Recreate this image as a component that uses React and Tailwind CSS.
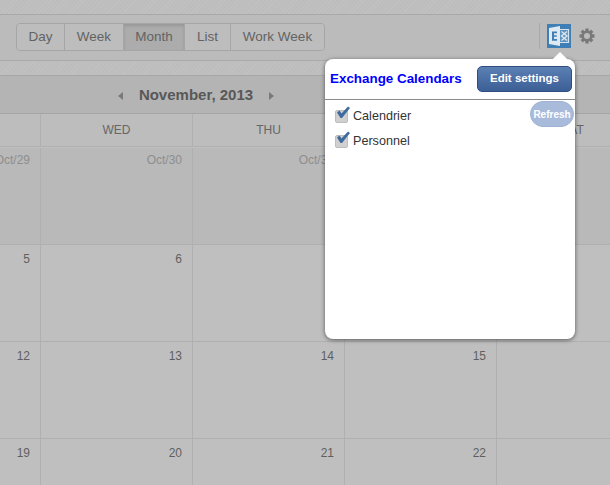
const hatch = 'h-[15px] border-b border-[#a9a9a9] bg-[#bfbfbf] bg-[repeating-linear-gradient(135deg,#c1c1c1_0px,#c1c1c1_1px,#bdbdbd_1px,#bdbdbd_3px)]'
const columns = 'grid grid-cols-[41px_152px_152px_152px_152px]'

const views = [
    { label: 'Day', width: 'w-[48px]' },
    { label: 'Week', width: 'w-[59px]' },
    { label: 'Month', width: 'w-[61px]', active: true },
    { label: 'List', width: 'w-[46px]' },
    { label: 'Work Week', width: 'w-[93px]' },
]

const weeks = [
    { height: 'h-[97px]', muted: true, days: ['Oct/29', 'Oct/30', 'Oct/31', '', ''] },
    { height: 'h-[97px]', days: ['5', '6', '', '', ''] },
    { height: 'h-[97px]', days: ['12', '13', '14', '15', ''] },
    { height: 'h-[60px]', days: ['19', '20', '21', '22', ''] },
]

function ExchangeIcon() {
    return (
        <svg width="24" height="24" viewBox="0 0 24 24" className="block">
            <rect width="24" height="24" fill="#3f7fb5" />
            <path d="M2 4 13 2v20L2 20z" fill="#dfe9f1" />
            <path d="M5 7.500h5v1.700H7v2h2.700v1.600H7v2.200h3V16.700H5z" fill="#3f7fb5" />
            <path d="M13 5.500h8.500v13H13" fill="#5f95c1" stroke="#d5e3ee" strokeWidth="1.200" />
            <path d="M14.500 7.500l5.500 4.500-5.500 4.500M20 7.500 14.500 12l5.500 4.500" fill="none" stroke="#dfe9f1" strokeWidth="1.300" />
        </svg>
    )
}

function GearIcon() {
    const teeth = [0, 45, 90, 135]
    return (
        <svg width="16" height="16" viewBox="0 0 16 16" className="block">
            {teeth.map((angle) => (
                <rect key={angle} x="6.300" y="0.500" width="3.400" height="15" rx="0.600" fill="#797979" transform={`rotate(${angle} 8 8)`} />
            ))}
            <circle cx="8" cy="8" r="5.500" fill="#797979" />
            <circle cx="8" cy="8" r="3" fill="#bbbbbb" />
        </svg>
    )
}

function CalendarOption({ label }) {
    return (
        <div className="flex items-center h-[25px]">
            <span className="relative w-[13px] h-[13px] mt-[1px] rounded-[2px] bg-[#d0d0d0] border border-[#bdbdbd]">
                <svg width="15" height="13" viewBox="0 0 15 13" className="absolute -top-[5px] left-0">
                    <path d="M1 6.500 3.500 4.500 5.500 7.500 12 0.500 14 2 6 12 4.500 12z" fill="#3e6a9e" />
                </svg>
            </span>
            <span className="ml-[5px] mt-[2px] text-[12.6px] text-[#333]">{label}</span>
        </div>
    )
}

export default function App() {
    return (
        <div className="relative w-[610px] h-[485px] overflow-hidden bg-[#bfbfbf] font-['Liberation_Sans',Arial,sans-serif]">
            <div className={hatch} />

            {/* 工具栏 */}
            <div className="h-[46px] flex items-center justify-between pl-[16px] pr-[15px] border-b border-[#a9a9a9] bg-[#bbbbbb]">
                <div className="flex h-[28px] -mt-[1px] rounded-[4px] border border-[#a5a5a5] overflow-hidden">
                    {views.map((view) => (
                        <div
                            key={view.label}
                            className={`${view.width} flex items-center justify-center text-[13.5px] text-[#636363] border-r border-[#a5a5a5] last:border-r-0 ${view.active ? 'bg-[#acacac] shadow-[inset_0_2px_3px_rgba(0,0,0,0.12)]' : 'bg-[#bdbdbd]'}`}
                        >
                            {view.label}
                        </div>
                    ))}
                </div>
                <div className="flex items-center -mt-[3px]">
                    <div className="w-px h-[26px] bg-[#a9a9a9] mr-[7px]" />
                    <ExchangeIcon />
                    <div className="ml-[8px]"><GearIcon /></div>
                </div>
            </div>

            <div className={hatch} />

            {/* 月份标题 */}
            <div className="h-[38px] flex items-center justify-center pr-[218px] pt-[2px] bg-[#b4b4b4] border-b border-[#a4a4a4] shadow-[0_1px_2px_rgba(0,0,0,0.12)]">
                <span className="w-0 h-0 border-y-[4px] border-y-transparent border-r-[5px] border-r-[#7a7a7a]" />
                <span className="mx-[16px] text-[15px] font-bold text-[#585858]">November, 2013</span>
                <span className="w-0 h-0 border-y-[4px] border-y-transparent border-l-[5px] border-l-[#7a7a7a]" />
            </div>

            {/* 星期 */}
            <div className={`${columns} h-[33px] bg-[#bdbdbd] border-b border-[#b0b0b0]`}>
                {['', 'WED', 'THU', '', 'SAT'].map((day, i) => (
                    <div key={i} className="flex items-center justify-center border-r border-[#b0b0b0] text-[12px] text-[#666]">{day}</div>
                ))}
            </div>

            {/* 日期格 */}
            {weeks.map((week, i) => (
                <div key={i} className={`${columns} ${week.height} border-b border-[#b0b0b0] ${i === 0 ? 'mt-px' : ''} ${week.muted ? 'bg-[#b9b9b9]' : 'bg-[#bfbfbf]'}`}>
                    {week.days.map((day, j) => (
                        <div
                            key={j}
                            className={`overflow-hidden whitespace-nowrap flex justify-end pr-[10px] border-r border-[#b0b0b0] text-[12px] ${week.muted ? 'pt-[3px] text-[#8e8e8e]' : 'pt-[5px] text-[#5f5f5f]'}`}
                        >
                            {day}
                        </div>
                    ))}
                </div>
            ))}

            {/* Exchange 日历弹层 */}
            <div className="absolute left-[325px] top-[59px] w-[250px] h-[280px] rounded-[8px] bg-white shadow-[0_1px_4px_rgba(0,0,0,0.55)]">
                <div className="absolute -top-[5px] left-[230px] w-[10px] h-[10px] rotate-45 bg-white" />
                <div className="h-[41px] flex items-center justify-between pl-[5px] pr-[3px] border-b border-[#8a8a8a]">
                    <span className="text-[13.4px] font-bold text-[#0000ff]">Exchange Calendars</span>
                    <button className="w-[95px] h-[26px] rounded-[5px] border border-[#2f4d80] bg-gradient-to-b from-[#5b80b3] to-[#3c5f96] text-[11.5px] font-bold text-white">
                        Edit settings
                    </button>
                </div>
                <div className="relative pt-[3px] pl-[10px]">
                    <CalendarOption label="Calendrier" />
                    <CalendarOption label="Personnel" />
                    <button className="absolute top-[1px] right-[1px] w-[44px] h-[26px] rounded-full bg-[#a9bbdb] border border-[#9fb2d3] text-[10px] font-bold text-white">
                        Refresh
                    </button>
                </div>
            </div>
        </div>
    )
}
